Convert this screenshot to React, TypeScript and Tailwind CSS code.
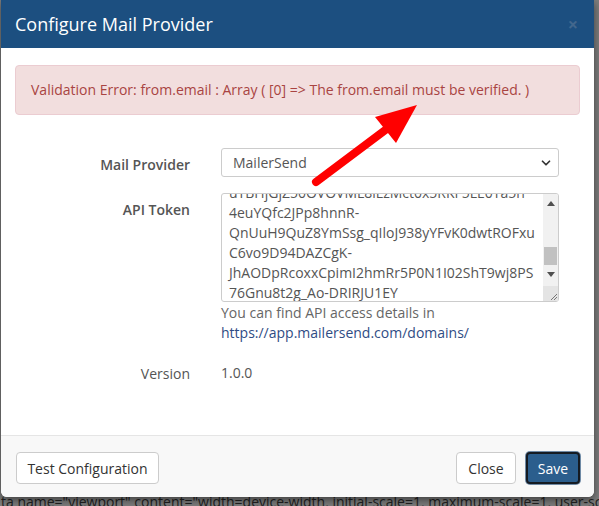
import { ChevronDown } from "lucide-react";

const tokenLines = [
  "uTBHjGjZ50OVOVML8iLzMct0x5RKF5LE0Ta5h",
  "4euYQfc2JPp8hnnR-",
  "QnUuH9QuZ8YmSsg_qIloJ938yYFvK0dwtROFxu",
  "C6vo9D94DAZCgK-",
  "JhAODpRcoxxCpimI2hmRr5P0N1I02ShT9wj8PS",
  "76Gnu8t2g_Ao-DRIRJU1EY",
];

function FieldLabel({ children }: { children: string }) {
  return (
    <div className="w-[175px] shrink-0 pt-[7px] text-right text-[14px] leading-[20px] font-semibold text-[#555]">
      {children}
    </div>
  );
}

function TokenBox() {
  return (
    <div className="relative flex h-[109px] w-[338px] overflow-hidden rounded-[3px] border border-[#ccc] bg-white">
      <div className="mt-[-11px] flex-1 pl-[7px] text-[14px] leading-[20px] whitespace-nowrap text-[#555]">
        {tokenLines.map((line) => (
          <div key={line}>{line}</div>
        ))}
      </div>
      <div className="flex w-[15px] shrink-0 flex-col items-center bg-[#f1f1f1]">
        <div className="mt-[7px] h-0 w-0 border-x-[4px] border-b-[5px] border-x-transparent border-b-[#505050]" />
        <div className="mt-[41px] h-[18px] w-[13px] bg-[#c1c1c1]" />
        <div className="mt-[7px] h-0 w-0 border-x-[4px] border-t-[5px] border-x-transparent border-t-[#505050]" />
        <div className="mt-auto flex h-[15px] w-[15px] items-end justify-end bg-[#e4e4e4]">
          <svg width="10" height="10" viewBox="0 0 10 10">
            <path d="M9 3 L3 9 M9 6 L6 9" stroke="#777" strokeWidth="1" />
          </svg>
        </div>
      </div>
    </div>
  );
}

function Arrow() {
  return (
    <svg className="pointer-events-none absolute top-0 left-0 z-20" width="599" height="506" viewBox="0 0 599 506">
      <line x1="316" y1="182" x2="388" y2="128" stroke="#ff0000" strokeWidth="8" strokeLinecap="round" />
      <polygon points="417,105 375,117 396,143" fill="#ff0000" />
    </svg>
  );
}

export default function App() {
  return (
    <div
      className="relative h-[506px] w-[599px] overflow-hidden bg-[#7d7d7d]"
      style={{ fontFamily: '"Open Sans", "Liberation Sans", sans-serif' }}
    >
      <div className="relative z-10 ml-[1px] w-[593px] overflow-hidden rounded-b-[6px] bg-white shadow-[0_3px_9px_rgba(0,0,0,0.5)]">
        <div className="flex h-[48px] items-center justify-between bg-[#1c4f80] pr-[16px] pl-[14px]">
          <h4 className="text-[18px] leading-[24px] text-white">Configure Mail Provider</h4>
          <span className="text-[18px] leading-none font-bold text-[#42678d]">×</span>
        </div>

        <div className="h-[387px] px-[14px] pt-[17px]">
          <div className="rounded-[4px] border border-[#ebccd1] bg-[#f2dede] px-[15px] py-[14px] text-[14px] leading-[20px] text-[#a94442]">
            Validation Error: from.email : Array ( [0] =&gt; The from.email must be verified. )
          </div>

          <div className="mt-[33px] flex gap-[31px]">
            <FieldLabel>Mail Provider</FieldLabel>
            <div className="flex h-[29px] w-[338px] items-center justify-between rounded-[3px] border border-[#ccc] bg-white pr-[5px] pl-[11px] text-[14px] text-[#555]">
              <span>MailerSend</span>
              <ChevronDown size={14} strokeWidth={3} className="text-[#333]" />
            </div>
          </div>

          <div className="mt-[16px] flex gap-[31px]">
            <FieldLabel>API Token</FieldLabel>
            <div>
              <TokenBox />
              <div className="mt-[1px] text-[14px] leading-[20px] text-[#666]">
                <div>You can find API access details in</div>
                <a className="text-[#2f4c84]">https://app.mailersend.com/domains/</a>
              </div>
            </div>
          </div>

          <div className="mt-[14px] flex gap-[31px]">
            <div className="w-[175px] shrink-0 pt-[7px] text-right text-[14px] leading-[20px] text-[#555]">Version</div>
            <div className="pt-[6px] text-[14px] leading-[20px] text-[#555]">1.0.0</div>
          </div>
        </div>

        <div className="flex items-center border-t border-[#e5e5e5] bg-[#f8f8f8] pt-[16px] pr-[14px] pb-[13px] pl-[15px]">
          <button className="h-[32px] w-[143px] rounded-[4px] border border-[#ccc] bg-white text-[14px] text-[#333]">
            Test Configuration
          </button>
          <button className="ml-auto h-[32px] w-[60px] rounded-[4px] border border-[#ccc] bg-white text-[14px] text-[#333]">
            Close
          </button>
          <button className="ml-[10px] h-[32px] w-[54px] rounded-[4px] border-2 border-[#151b22] bg-[#2b5e8d] text-[14px] text-white shadow-[0_0_0_1px_#6f8aa5]">
            Save
          </button>
        </div>
      </div>

      <div className="mt-[-5px] pl-[1px] text-[14px] leading-[20px] whitespace-nowrap text-[#222]">
        ta name="viewport" content="width=device-width, initial-scale=1, maximum-scale=1, user-scalable=no"&gt;
      </div>

      <Arrow />
    </div>
  );
}
